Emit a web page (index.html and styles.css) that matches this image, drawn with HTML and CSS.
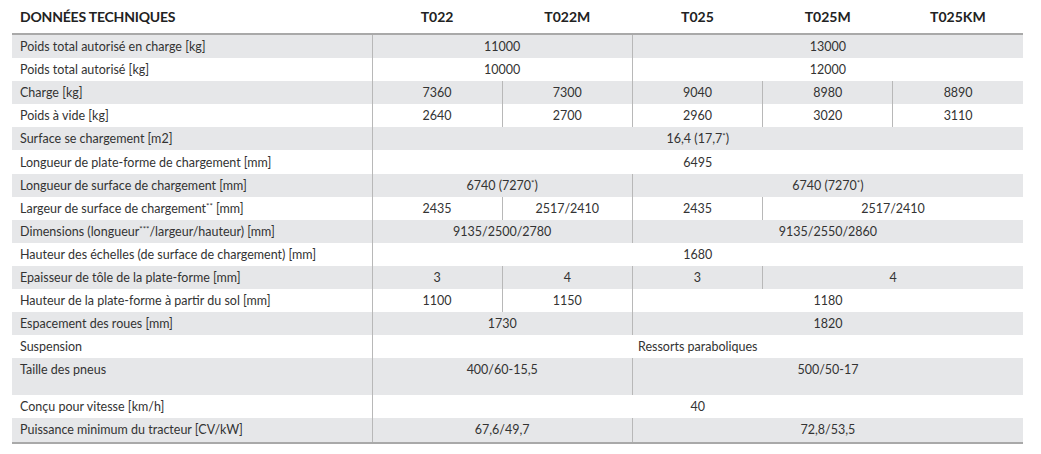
FILE: index.html
```html
<!DOCTYPE html>
<html lang="fr">
<head>
<meta charset="utf-8">
<title>Données techniques</title>
<link rel="stylesheet" href="styles.css">
</head>
<body>
<table class="spec">
  <colgroup>
    <col class="c-label"><col class="c-val"><col class="c-val"><col class="c-val"><col class="c-val"><col class="c-val">
  </colgroup>
  <thead>
    <tr class="head">
      <th class="title">DONNÉES TECHNIQUES</th>
      <th>T022</th><th>T022M</th><th>T025</th><th>T025M</th><th>T025KM</th>
    </tr>
  </thead>
  <tbody>
    <tr class="g"><td class="lbl">Poids total autorisé en charge [kg]</td><td colspan="2">11000</td><td colspan="3">13000</td></tr>
    <tr><td class="lbl">Poids total autorisé [kg]</td><td colspan="2">10000</td><td colspan="3">12000</td></tr>
    <tr class="g"><td class="lbl">Charge [kg]</td><td>7360</td><td>7300</td><td>9040</td><td>8980</td><td>8890</td></tr>
    <tr><td class="lbl">Poids à vide [kg]</td><td>2640</td><td>2700</td><td>2960</td><td>3020</td><td>3110</td></tr>
    <tr class="g"><td class="lbl">Surface se chargement [m2]</td><td colspan="5">16,4 (17,7<sup>*</sup>)</td></tr>
    <tr><td class="lbl">Longueur de plate-forme de chargement [mm]</td><td colspan="5">6495</td></tr>
    <tr class="g"><td class="lbl">Longueur de surface de chargement [mm]</td><td colspan="2">6740 (7270<sup>*</sup>)</td><td colspan="3">6740 (7270<sup>*</sup>)</td></tr>
    <tr><td class="lbl">Largeur de surface de chargement<sup>**</sup> [mm]</td><td>2435</td><td>2517/2410</td><td>2435</td><td colspan="2">2517/2410</td></tr>
    <tr class="g"><td class="lbl">Dimensions (longueur<sup>***</sup>/largeur/hauteur) [mm]</td><td colspan="2">9135/2500/2780</td><td colspan="3">9135/2550/2860</td></tr>
    <tr><td class="lbl">Hauteur des échelles (de surface de chargement) [mm]</td><td colspan="5">1680</td></tr>
    <tr class="g"><td class="lbl">Epaisseur de tôle de la plate-forme [mm]</td><td>3</td><td>4</td><td>3</td><td colspan="2">4</td></tr>
    <tr><td class="lbl">Hauteur de la plate-forme à partir du sol [mm]</td><td>1100</td><td>1150</td><td colspan="3">1180</td></tr>
    <tr class="g"><td class="lbl">Espacement des roues [mm]</td><td colspan="2">1730</td><td colspan="3">1820</td></tr>
    <tr><td class="lbl">Suspension</td><td colspan="5">Ressorts paraboliques</td></tr>
    <tr class="g tall"><td class="lbl">Taille des pneus</td><td colspan="2">400/60-15,5</td><td colspan="3">500/50-17</td></tr>
    <tr><td class="lbl">Conçu pour vitesse [km/h]</td><td colspan="5">40</td></tr>
    <tr class="g last"><td class="lbl">Puissance minimum du tracteur [CV/kW]</td><td colspan="2">67,6/49,7</td><td colspan="3">72,8/53,5</td></tr>
  </tbody>
</table>
</body>
</html>
```
FILE: styles.css
```css
html, body {
  margin: 0;
  padding: 0;
  background: #ffffff;
}
body {
  font-family: "Lato", "Open Sans", sans-serif;
  color: #333333;
}
.spec {
  margin-left: 12px;
  width: 1011px;
  border-collapse: collapse;
  table-layout: fixed;
  font-size: 12.5px;
}
.c-label { width: 360px; }
.c-val { width: 130.2px; }

.head th {
  height: 33px;
  padding: 0;
  font-size: 14px;
  font-weight: 700;
  color: #222;
  text-align: center;
  vertical-align: middle;
  border-bottom: 2px solid #a9a9a9;
}
.head th.title {
  text-align: left;
  padding-left: 8px;
  letter-spacing: -0.2px;
}
.spec td {
  height: 23.1px;
  padding: 0;
  text-align: center;
  vertical-align: middle;
  border-left: 1px solid #b8b8b8;
  line-height: 15px;
  white-space: nowrap;
}
.spec td.lbl {
  text-align: left;
  padding-left: 8px;
  border-left: 0;
}
.spec tr.g td { background: #e6e7e9; }
.spec tr.tall td {
  height: 33px;
  vertical-align: top;
  padding-top: 4px;
}
.spec tr.last td { border-bottom: 2px solid #a9a9a9; }
sup {
  font-size: 8px;
  line-height: 0;
  vertical-align: 4px;
}
```
